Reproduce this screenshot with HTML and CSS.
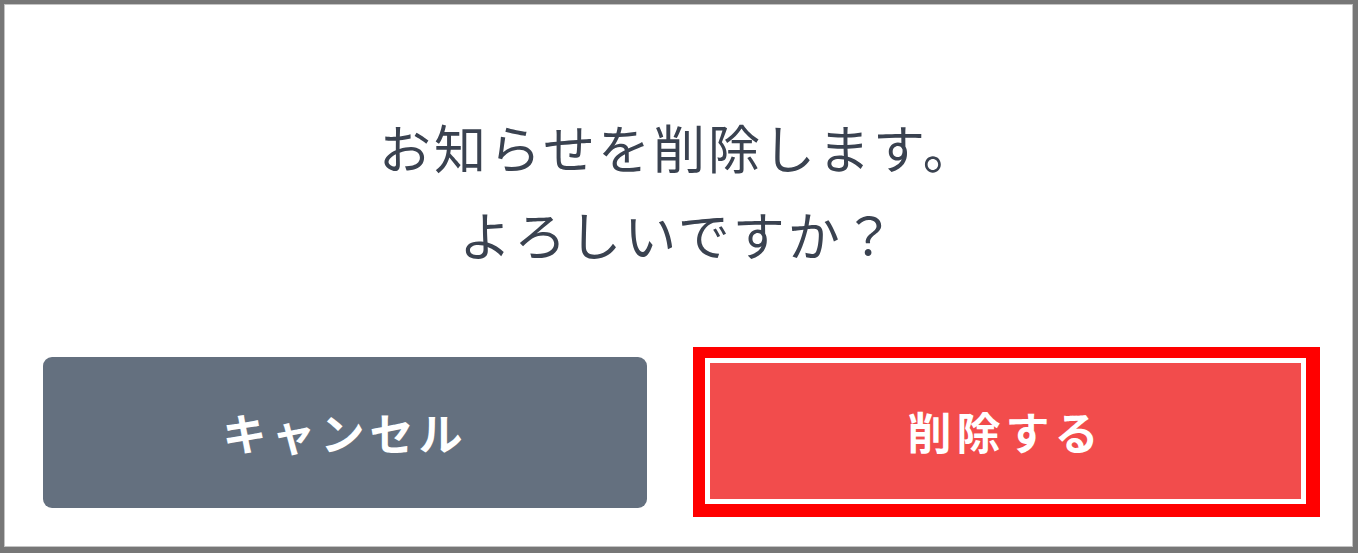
FILE: index.html
```html
<!DOCTYPE html>
<html lang="ja">
<head>
<meta charset="utf-8">
<link rel="stylesheet" href="styles.css">
</head>
<body>
<div class="frame">
  <p class="message">お知らせを削除します。<br>よろしいですか？</p>
  <div class="actions">
    <button class="btn btn-cancel">キャンセル</button>
    <div class="highlight">
      <button class="btn btn-delete">削除する</button>
    </div>
  </div>
</div>
</body>
</html>
```
FILE: styles.css
```css
html, body {
  margin: 0;
  padding: 0;
  background: #ffffff;
}
.frame {
  box-sizing: border-box;
  width: 1358px;
  height: 553px;
  border-style: solid;
  border-color: #777777;
  border-width: 4px 5px 6px 4px;
  box-shadow: inset 0 0 0 1px #c4c4c4;
  display: flex;
  flex-direction: column;
  font-family: "Noto Sans CJK JP", "Noto Sans", sans-serif;
}
.message {
  margin: 99px 0 0 0;
  text-align: center;
  font-size: 52px;
  line-height: 87px;
  letter-spacing: 3px;
  color: #3a4250;
}
.actions {
  display: flex;
  align-items: center;
  margin-top: 70px;
  padding-left: 39px;
  gap: 46px;
}
.btn {
  border: none;
  margin: 0;
  padding: 0;
  font-family: "Noto Sans CJK JP", "Noto Sans", sans-serif;
  font-weight: 700;
  font-size: 44px;
  letter-spacing: 5px;
  color: #ffffff;
  display: flex;
  align-items: center;
  justify-content: center;
}
.btn-cancel {
  width: 604px;
  height: 151px;
  background: #64707f;
  border-radius: 9px;
}
.highlight {
  border-style: solid;
  border-color: #ff0000;
  border-width: 11px 14px 13px 12px;
  padding: 5px;
  background: #ffffff;
}
.btn-delete {
  width: 591px;
  height: 136px;
  background: #f24c4c;
}
```
